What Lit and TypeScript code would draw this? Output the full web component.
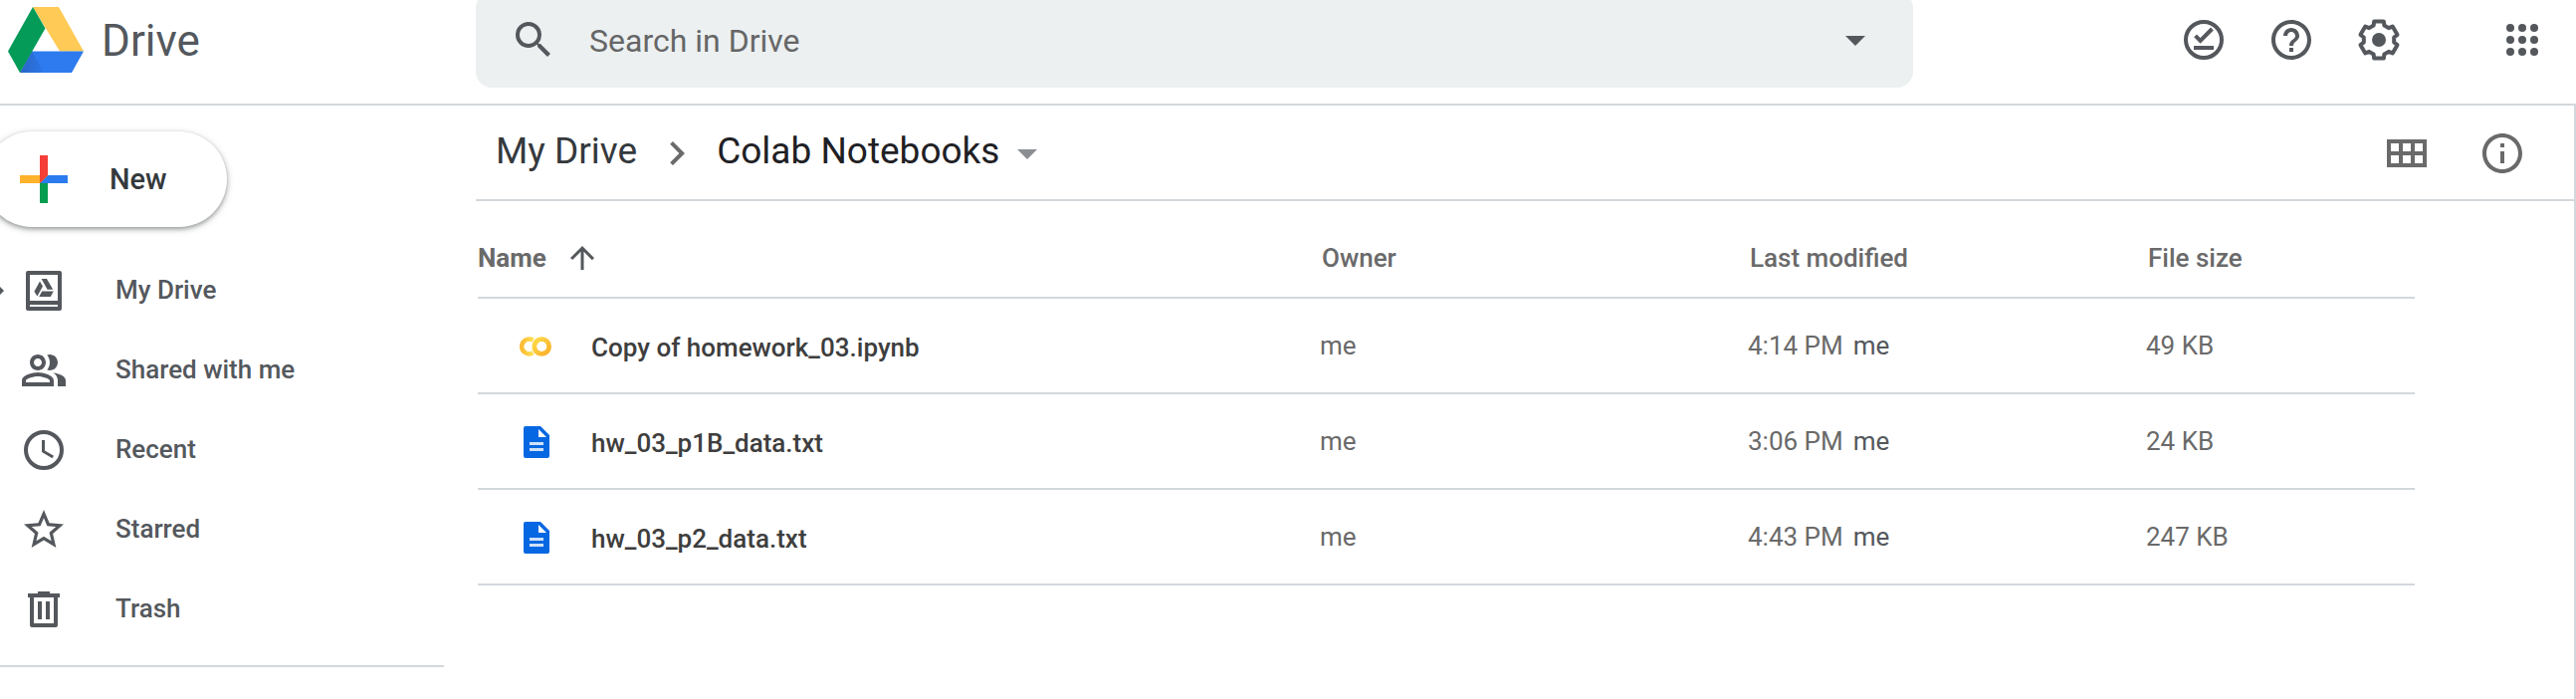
import { LitElement, html, css, svg } from "lit";
import { customElement, property } from "lit/decorators.js";

// Outline of a six-toothed cog, centred in a 24-unit box.
const cogPath = (() => {
  const profile: [number, number][] = [[-2.7, 7.2], [-2.4, 9.3], [2.4, 9.3], [2.7, 7.2]];
  const points: string[] = [];
  for (let tooth = 0; tooth < 6; tooth++) {
    const a = (tooth * Math.PI) / 3;
    for (const [x, r] of profile) {
      const px = 12 + x * Math.cos(a) + r * Math.sin(a);
      const py = 12 + x * Math.sin(a) - r * Math.cos(a);
      points.push(`${px.toFixed(2)} ${py.toFixed(2)}`);
    }
  }
  return `M${points.join("L")}Z`;
})();

const glyphs: Record<string, unknown> = {
  search: svg`<path d="M15.5 14h-.79l-.28-.27A6.471 6.471 0 0 0 16 9.5 6.5 6.5 0 1 0 9.5 16c1.61 0 3.09-.59 4.23-1.57l.27.28v.79l5 4.99L20.49 19l-4.99-5zm-6 0C7.01 14 5 11.99 5 9.5S7.01 5 9.5 5 14 7.01 14 9.5 11.99 14 9.5 14z"/>`,
  caret: svg`<path d="M7 10l5 5 5-5z"/>`,
  chevron: svg`<path d="M10 6L8.59 7.41 13.17 12l-4.58 4.59L10 18l6-6z"/>`,
  offline: svg`<circle class="line" cx="12" cy="12" r="9"/><path class="line" d="M7.8 9.9l2.5 2.5 5.9-5.9"/><path d="M7 15h10v2H7z"/>`,
  help: svg`<path d="M11 18h2v-2h-2v2zm1-16C6.48 2 2 6.48 2 12s4.48 10 10 10 10-4.48 10-10S17.52 2 12 2zm0 18c-4.41 0-8-3.59-8-8s3.59-8 8-8 8 3.59 8 8-3.59 8-8 8zm0-14c-2.21 0-4 1.79-4 4h2c0-1.1.9-2 2-2s2 .9 2 2c0 2-3 1.75-3 5h2c0-2.25 3-2.5 3-5 0-2.21-1.79-4-4-4z"/>`,
  settings: svg`<path class="line" stroke-linejoin="round" d=${cogPath}/><circle cx="12" cy="12" r="3.5"/>`,
  apps: svg`${[6, 12, 18].map((y) => [6, 12, 18].map((x) => svg`<circle cx=${x} cy=${y} r="2"/>`))}`,
  grid: svg`<path fill-rule="evenodd" d="M2 5h20v14H2zM4 7v4h4V7zM10 7v4h4V7zM16 7v4h4V7zM4 13v4h4v-4zM10 13v4h4v-4zM16 13v4h4v-4z"/>`,
  info: svg`<path d="M11 17h2v-6h-2v6zm1-15C6.48 2 2 6.48 2 12s4.48 10 10 10 10-4.48 10-10S17.52 2 12 2zm0 18c-4.41 0-8-3.59-8-8s3.59-8 8-8 8 3.59 8 8-3.59 8-8 8zM11 9h2V7h-2v2z"/>`,
  up: svg`<path d="M4 12l1.41 1.41L11 7.83V20h2V7.83l5.58 5.59L20 12l-8-8z"/>`,
  drive: svg`<path fill-rule="evenodd" d="M4 2h16a1 1 0 0 1 1 1v18a1 1 0 0 1-1 1H4a1 1 0 0 1-1-1V3a1 1 0 0 1 1-1zM5 4v13h14V4zM5 19v1h14v-1z"/><path d="M10 7.2l1.5 2.5-2.8 5.1-1.5-2.4zM10.8 6h2.7l3.1 5.4h-2.8zM11.1 12.2h5.8L15.4 15H9.6z"/>`,
  shared: svg`<path d="M9 12c2.21 0 4-1.79 4-4s-1.79-4-4-4-4 1.79-4 4 1.79 4 4 4zm0-6c1.1 0 2 .9 2 2s-.9 2-2 2-2-.9-2-2 .9-2 2-2zM9 13c-2.67 0-8 1.34-8 4v3h16v-3c0-2.66-5.33-4-8-4zm6 5H3v-.99C3.2 16.29 6.3 15 9 15s5.8 1.29 6 2v1zM15 12c2.21 0 4-1.79 4-4s-1.79-4-4-4c-.47 0-.91.1-1.33.24C14.5 5.27 15 6.58 15 8s-.5 2.73-1.33 3.76c.42.14.86.24 1.33.24zM16.67 13.13C18.04 14.06 19 15.32 19 17v3h4v-3c0-2.18-3.57-3.47-6.33-3.87z"/>`,
  recent: svg`<circle class="line" cx="12" cy="12" r="9"/><path d="M12.5 7H11v6l5.25 3.15.75-1.23-4.5-2.67z"/>`,
  starred: svg`<path d="M22 9.24l-7.19-.62L12 2 9.19 8.63 2 9.24l5.46 4.73L5.82 21 12 17.27 18.18 21l-1.63-7.03L22 9.24zM12 15.4l-3.76 2.27 1-4.28-3.32-2.88 4.38-.38L12 6.1l1.71 4.04 4.38.38-3.32 2.88 1 4.28L12 15.4z"/>`,
  trash: svg`<path fill-rule="evenodd" d="M9 3h6v1h5v2h-1v14a1 1 0 0 1-1 1H6a1 1 0 0 1-1-1V6H4V4h5zM7 6v13h10V6zM9 8h2v9H9zM13 8h2v9h-2z"/>`,
};

@customElement("drive-icon")
class DriveIcon extends LitElement {
  @property() name = "";

  static styles = css`
    :host { display: block; flex: none; width: 48px; height: 48px; }
    .glyph { display: block; width: 100%; height: 100%; fill: currentColor; }
    .line { fill: none; stroke: currentColor; stroke-width: 2; }
  `;

  render() {
    return html`<svg class="glyph" viewBox="0 0 24 24" aria-hidden="true">${glyphs[this.name]}</svg>`;
  }
}

const navItems = [
  { icon: "drive", label: "My Drive", expandable: true },
  { icon: "shared", label: "Shared with me" },
  { icon: "recent", label: "Recent" },
  { icon: "starred", label: "Starred" },
  { icon: "trash", label: "Trash" },
];

const files = [
  { kind: "colab", name: "Copy of homework_03.ipynb", owner: "me", time: "4:14 PM", by: "me", size: "49 KB" },
  { kind: "doc", name: "hw_03_p1B_data.txt", owner: "me", time: "3:06 PM", by: "me", size: "24 KB" },
  { kind: "doc", name: "hw_03_p2_data.txt", owner: "me", time: "4:43 PM", by: "me", size: "247 KB" },
];

@customElement("app-root")
class AppRoot extends LitElement {
  static styles = css`
    :host {
      --ink: #54585d;
      --grey: #6a6a6a;
      --rule: #d3d8dc;
      --side: 478px;
      display: flex;
      flex-direction: column;
      min-height: 100vh;
      overflow: hidden;
      background: #fff;
      color: var(--ink);
      font: 400 26px/32px Roboto, sans-serif;
    }
    * { box-sizing: border-box; }
    button { padding: 0; border: 0; background: none; color: inherit; font: inherit; cursor: pointer; }
    a { color: inherit; text-decoration: none; }

    .top { display: flex; align-items: center; margin-top: -8px; padding: 0 30px 16px 0; border-bottom: 2px solid var(--rule); }
    .brand { display: flex; flex: none; align-items: center; gap: 18px; width: var(--side); padding-left: 8px; font-size: 44px; line-height: 56px; }
    .product { padding-top: 2px; }
    .logo { display: block; width: 76px; height: 66px; }
    .search { display: flex; flex: 1; align-items: center; height: 96px; min-width: 0; padding: 0 34px; border-radius: 16px; background: #ecf0f1; }
    .query { flex: 1; min-width: 0; height: 48px; margin: 0 32px; padding: 2px 0 0; border: 0; outline: 0; background: none; color: #666; font: 400 32px/46px Roboto, sans-serif; }
    .query::placeholder { color: #666; opacity: 1; }
    .tools { display: flex; gap: 40px; margin-left: 268px; }
    .apps { margin-left: 56px; }

    .body { display: flex; flex: 1; }
    .side { flex: none; width: var(--side); padding: 26px 32px 0 0; }
    .new { display: flex; align-items: center; gap: 30px; width: 244px; height: 96px; margin-left: -16px; padding-left: 24px; border-radius: 48px; background: #fff; box-shadow: 0 2px 4px rgba(60, 64, 67, 0.45), 0 2px 6px 2px rgba(60, 64, 67, 0.12); color: #35393d; font-size: 29px; font-weight: 500; }
    .plus { display: block; width: 72px; height: 72px; }
    .nav { margin: 24px 0 0; padding: 0 0 16px; border-bottom: 2px solid var(--rule); list-style: none; }
    .entry { display: grid; grid-template-columns: 4px 48px 1fr; align-items: center; height: 80px; font-weight: 500; }
    .entry drive-icon { grid-column: 2; margin-left: 16px; }
    .entry .label { grid-column: 3; padding: 0 0 2px 64px; }
    .expander { display: block; grid-row: 1; width: 4px; height: 8px; fill: currentColor; }

    .main { flex: 1; min-width: 0; border-right: 2px solid var(--rule); }
    .bar { display: flex; align-items: center; height: 96px; padding: 2px 48px 0 20px; border-bottom: 2px solid var(--rule); color: var(--grey); }
    .crumb { display: flex; align-items: center; padding-bottom: 4px; color: #35393d; font-size: 37px; line-height: 40px; }
    .current { color: #1f2024; }
    .sep { margin: 0 16px; }
    .down { margin-left: 4px; color: #8b8f94; }
    .views { display: flex; gap: 48px; margin-left: auto; }

    .files { width: calc(100% - 162px); margin-left: 2px; border-collapse: separate; border-spacing: 0; table-layout: fixed; color: var(--grey); }
    .files th, .files td { height: 96px; padding: 0; border-bottom: 2px solid var(--rule); text-align: left; vertical-align: middle; font-weight: 400; white-space: nowrap; }
    .files thead th { height: 98px; padding: 18px 0 0 2px; font-weight: 500; }
    .files thead .name { padding-left: 0; }
    .owner { width: 430px; }
    .modified { width: 400px; }
    .size { width: 270px; }
    .sort { display: flex; align-items: center; gap: 18px; font-weight: 700; }
    .sort drive-icon { width: 36px; height: 36px; color: var(--ink); }
    .file { display: flex; align-items: center; gap: 40px; padding: 2px 0 0 42px; color: #3e3e3e; font-weight: 500; }
    .title { padding-top: 2px; }
    .kind { display: block; width: 32px; height: 32px; }
    .by { margin-left: 10px; color: var(--ink); }
  `;

  private fileIcon(kind: string) {
    return kind === "colab"
      ? html`<svg class="kind" viewBox="0 0 32 32" aria-hidden="true">
          <defs>
            <linearGradient id="amber" x1="0" y1="0" x2="1" y2="1"><stop offset="0" stop-color="#ffdb45"/><stop offset="1" stop-color="#fbae2c"/></linearGradient>
            <linearGradient id="lemon" x1="0" y1="0" x2="1" y2="0"><stop offset="0" stop-color="#fdbb33"/><stop offset="1" stop-color="#ffe152"/></linearGradient>
          </defs>
          <path d="M13.500 9.700A7.4 7.4 0 1 0 13.500 22.300" fill="none" stroke="url(#lemon)" stroke-width="4.6"/>
          <circle cx="22.200" cy="16" r="7.4" fill="none" stroke="url(#amber)" stroke-width="4.8"/>
        </svg>`
      : html`<svg class="kind" viewBox="0 0 32 32" aria-hidden="true">
          <path fill="#0667e2" d="M6 0h15l9 9v21a2 2 0 0 1-2 2H6a2 2 0 0 1-2-2V2a2 2 0 0 1 2-2z"/>
          <path fill="#fff" d="M19 3l8 8h-8z"/>
          <path fill="#cfe1fa" d="M10 16h14v3H10zM10 22h14v3H10z"/>
        </svg>`;
  }

  render() {
    return html`
      <header class="top">
        <a class="brand" href="#">
          <svg class="logo" viewBox="0 0 76 66" aria-hidden="true">
            <defs>
              <linearGradient id="shade" x1="0" y1="0" x2="1" y2="0"><stop offset="0" stop-color="#2a66c8"/><stop offset="1" stop-color="#2c76e6"/></linearGradient>
            </defs>
            <path fill="#ffca55" d="M25 0h26l25 44.500H52z"/>
            <path fill="#2d7bee" d="M24 44.500h52L64 66H12z"/>
            <path fill="url(#shade)" d="M24 44.500L12 66h24z"/>
            <path fill="#049a58" d="M25 0l12.500 21.500L12 66 0 44.500z"/>
          </svg>
          <span class="product">Drive</span>
        </a>
        <form class="search" role="search">
          <button type="button" aria-label="Search"><drive-icon name="search"></drive-icon></button>
          <input class="query" type="text" aria-label="Search in Drive" placeholder="Search in Drive" />
          <button type="button" aria-label="Search options"><drive-icon name="caret"></drive-icon></button>
        </form>
        <div class="tools">
          <button aria-label="Ready for offline"><drive-icon name="offline"></drive-icon></button>
          <button aria-label="Support"><drive-icon name="help"></drive-icon></button>
          <button aria-label="Settings"><drive-icon name="settings"></drive-icon></button>
          <button class="apps" aria-label="Google apps"><drive-icon name="apps"></drive-icon></button>
        </div>
      </header>
      <div class="body">
        <aside class="side">
          <button class="new">
            <svg class="plus" viewBox="0 0 36 36" aria-hidden="true">
              <path fill="#059d50" d="M16 16v14h4V16z"/>
              <path fill="#2b7bef" d="M30 16H20l-4 4h14z"/>
              <path fill="#ffb22b" d="M6 16v4h10l4-4z"/>
              <path fill="#f43e37" d="M20 16V6h-4v14z"/>
            </svg>
            New
          </button>
          <nav>
            <ul class="nav">
              ${navItems.map((item) => html`<li>
                <a class="entry" href="#">
                  ${item.expandable ? html`<svg class="expander" viewBox="0 0 4 8" aria-hidden="true"><path d="M0 0l4 4-4 4z"/></svg>` : null}
                  <drive-icon name=${item.icon}></drive-icon>
                  <span class="label">${item.label}</span>
                </a>
              </li>`)}
            </ul>
          </nav>
        </aside>
        <main class="main">
          <div class="bar">
            <a class="crumb" href="#">My Drive</a>
            <drive-icon class="sep" name="chevron"></drive-icon>
            <a class="crumb current" href="#">Colab Notebooks</a>
            <button class="down" aria-label="Folder actions"><drive-icon name="caret"></drive-icon></button>
            <div class="views">
              <button aria-label="Grid view"><drive-icon name="grid"></drive-icon></button>
              <button aria-label="View details"><drive-icon name="info"></drive-icon></button>
            </div>
          </div>
          <table class="files">
            <thead>
              <tr>
                <th class="name" scope="col"><button class="sort">Name<drive-icon name="up"></drive-icon></button></th>
                <th class="owner" scope="col">Owner</th>
                <th class="modified" scope="col">Last modified</th>
                <th class="size" scope="col">File size</th>
              </tr>
            </thead>
            <tbody>
              ${files.map((f) => html`<tr>
                <th scope="row"><a class="file" href="#">${this.fileIcon(f.kind)}<span class="title">${f.name}</span></a></th>
                <td>${f.owner}</td>
                <td>${f.time}<span class="by">${f.by}</span></td>
                <td>${f.size}</td>
              </tr>`)}
            </tbody>
          </table>
        </main>
      </div>
    `;
  }
}
